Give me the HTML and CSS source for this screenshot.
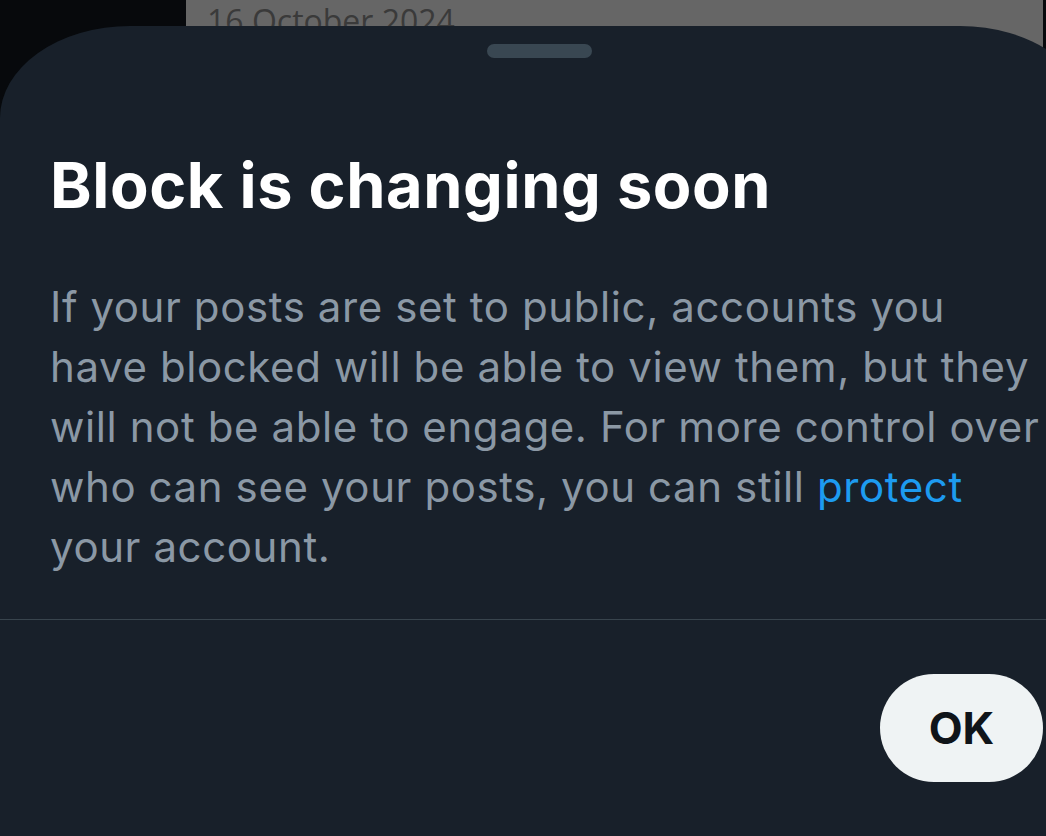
FILE: index.html
```html
<!DOCTYPE html>
<html lang="en">
<head>
<meta charset="utf-8">
<title>Block is changing soon</title>
<link rel="stylesheet" href="styles.css">
</head>
<body>
<div class="page">
  <div class="backdrop">
    <div class="bd-left"></div>
    <div class="bd-panel"><span class="bd-date">16 October 2024</span></div>
    <div class="bd-right"></div>
  </div>
  <section class="sheet">
    <div class="handle"></div>
    <div class="content">
      <h1 class="title">Block is changing soon</h1>
      <p class="body-text">If your posts are set to public, accounts you have blocked will be able to view them, but they will not be able to engage. For more control over who can see your posts, you can still <a class="link" href="#">protect</a> your account.</p>
    </div>
    <div class="divider"></div>
    <div class="actions">
      <button class="ok-btn" type="button">OK</button>
    </div>
  </section>
</div>
</body>
</html>
```

FILE: styles.css
```css
html, body {
  margin: 0;
  padding: 0;
  width: 1046px;
  height: 836px;
  overflow: hidden;
  background: #07090c;
}

.page {
  display: grid;
  width: 1046px;
  height: 836px;
  overflow: hidden;
}

.backdrop, .sheet {
  grid-area: 1 / 1;
}

.backdrop {
  display: grid;
  grid-template-columns: 186px 857px 1fr;
  height: 836px;
}

.bd-left, .bd-right {
  background: #07090c;
}

.bd-panel {
  background: #666666;
  padding: 3px 0 0 21px;
  overflow: hidden;
}

.bd-date {
  font-family: "Open Sans", "Liberation Sans", sans-serif;
  font-size: 32px;
  color: #3a3a3a;
  line-height: 36px;
}

.sheet {
  margin-top: 26px;
  width: 1090px;
  height: 810px;
  background: #18202a;
  border-radius: 130px 130px 0 0 / 92px 92px 0 0;
  display: flex;
  flex-direction: column;
  font-family: "Inter", "Liberation Sans", sans-serif;
}

.handle {
  width: 105px;
  height: 14px;
  border-radius: 7px;
  background: #394752;
  margin: 18px 0 0 487px;
}

.content {
  padding: 0 45px 0 50px;
}

.title {
  margin: 91px 0 0;
  font-size: 63px;
  font-weight: 700;
  line-height: 72px;
  color: #ffffff;
  letter-spacing: 0.6px;
}

.body-text {
  margin: 56px 0 0;
  font-size: 42px;
  line-height: 60px;
  color: #8b98a5;
  font-weight: 400;
  letter-spacing: 0.6px;
}

.link {
  color: #1d9bf0;
  text-decoration: none;
}

.divider {
  height: 1px;
  background: #38444d;
  margin-top: 42px;
}

.actions {
  display: flex;
  justify-content: flex-end;
  padding: 54px 47px 0 0;
}

.ok-btn {
  width: 163px;
  height: 108px;
  border: none;
  border-radius: 54px;
  background: #eff3f4;
  color: #0f1419;
  font-family: "Inter", "Liberation Sans", sans-serif;
  font-weight: 700;
  font-size: 44px;
  padding: 0;
}
```
